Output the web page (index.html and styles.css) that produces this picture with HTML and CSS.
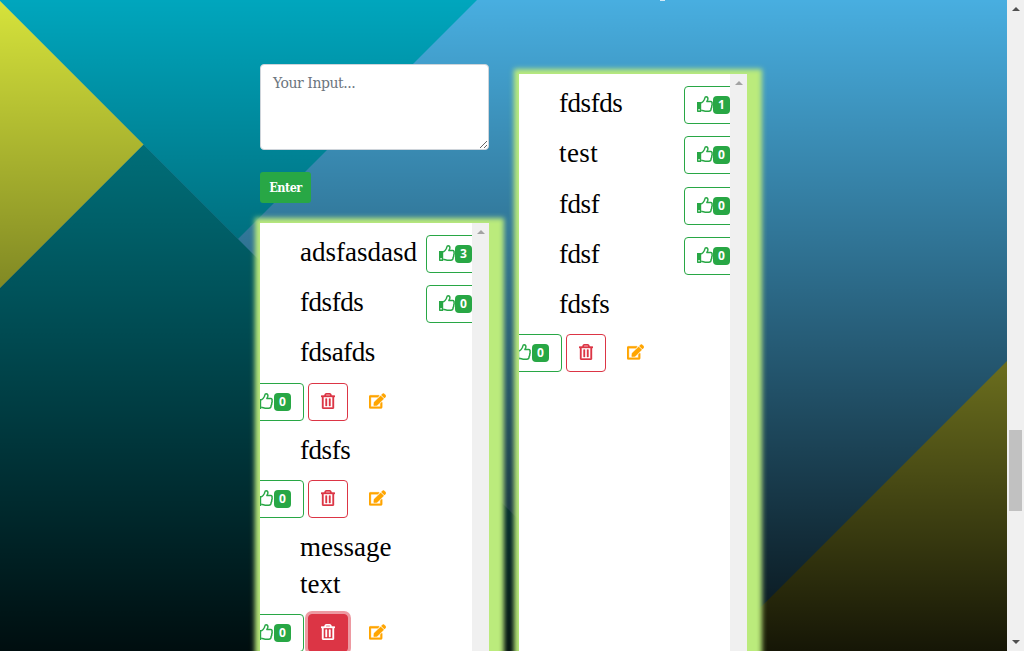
FILE: index.html
```html
<!DOCTYPE html>
<html lang="en">
<head>
<meta charset="utf-8">
<title>Messages</title>
<link rel="stylesheet" href="styles.css">
</head>
<body>
<svg class="defs" width="0" height="0" aria-hidden="true">
  <symbol id="thumb" viewBox="0 0 16 16"><path fill="currentColor" fill-rule="evenodd" d="M0 6h4.200v10H.6L0 15.400zM1.400 13v1.400h1.300V13z"/><path fill="none" stroke="currentColor" stroke-width="1.500" stroke-linejoin="round" d="M4.200 7C5.600 6.300 6.900 4.500 7.400 3.500C7.800 2.300 7.800 .8 9.100 .8C10.600 .8 11.200 2.200 10.700 3.700L9.900 5.600H13.800C14.800 5.600 15.300 6.500 15 7.500C15.300 8.500 15.200 9.300 14.700 10C14.900 11 14.700 11.800 14.100 12.400C14.200 14.200 13.400 15.200 11.700 15.200H9.600C7.600 15.200 6.200 14.500 4.200 14.200"/></symbol>
  <symbol id="trash" viewBox="0 0 448 512"><path d="M268 416h24a12 12 0 0 0 12-12V188a12 12 0 0 0-12-12h-24a12 12 0 0 0-12 12v216a12 12 0 0 0 12 12zM432 80h-82.41l-34-56.7A48 48 0 0 0 274.41 0H173.59a48 48 0 0 0-41.16 23.3L98.41 80H16A16 16 0 0 0 0 96v16a16 16 0 0 0 16 16h16v336a48 48 0 0 0 48 48h288a48 48 0 0 0 48-48V128h16a16 16 0 0 0 16-16V96a16 16 0 0 0-16-16zM171.84 50.91A6 6 0 0 1 177 48h94a6 6 0 0 1 5.15 2.91L293.61 80H154.39zM368 464H80V128h288zm-212-48h24a12 12 0 0 0 12-12V188a12 12 0 0 0-12-12h-24a12 12 0 0 0-12 12v216a12 12 0 0 0 12 12z"/></symbol>
  <symbol id="edit" viewBox="0 0 576 512"><path d="M402.6 83.2l90.2 90.2c3.8 3.8 3.8 10 0 13.8L274.4 405.6l-92.8 10.3c-12.4 1.4-22.9-9.1-21.5-21.5l10.3-92.8L388.8 83.2c3.8-3.8 10-3.8 13.8 0zm162-22.9l-48.8-48.8c-15.2-15.2-39.9-15.2-55.2 0l-35.4 35.4c-3.8 3.8-3.8 10 0 13.8l90.2 90.2c3.8 3.8 10 3.8 13.8 0l35.4-35.4c15.2-15.3 15.2-40 0-55.2zM384 346.2V448H64V128h229.8c3.2 0 6.2-1.3 8.5-3.5l40-40c7.6-7.6 2.2-20.5-8.5-20.5H48C21.5 64 0 85.5 0 112v352c0 26.5 21.5 48 48 48h352c26.5 0 48-21.5 48-48V306.2c0-10.7-12.9-16-20.5-8.5l-40 40c-2.2 2.3-3.5 5.3-3.5 8.5z"/></symbol>
</svg>
<div class="page">
  <main class="canvas">
    <svg class="backdrop" viewBox="0 0 1007 651" aria-hidden="true">
      <defs><linearGradient id="shade" x1="0" y1="0" x2="0" y2="1"><stop offset="0" stop-color="#000" stop-opacity="0"/><stop offset="1" stop-color="#000" stop-opacity=".9"/></linearGradient></defs>
      <rect width="1007" height="651" fill="#48aee0"/>
      <path fill="#00a6bd" d="M0 0H477L238 239L0 1Z"/>
      <path fill="#008a97" d="M0 288L143.500 144.500L650 651H0Z"/>
      <path fill="#d6e33b" d="M0 1L143.500 144.500L0 288Z"/>
      <path fill="#d6dc3b" d="M1007 361V651H717Z"/>
      <rect width="1007" height="651" fill="url(#shade)"/>
    </svg>
    <div class="heading-tail"></div>
    <section class="column column-left">
      <textarea class="message-input" placeholder="Your Input..."></textarea>
      <button class="enter">Enter</button>
      <div class="panel">
        <div class="list list-left">
          <div class="item"><p class="text long">adsfasdasd</p><button class="btn like"><svg class="icon"><use href="#thumb"/></svg><span class="badge">3</span></button></div>
          <div class="item"><p class="text">fdsfds</p><button class="btn like"><svg class="icon"><use href="#thumb"/></svg><span class="badge">0</span></button></div>
          <p class="text block">fdsafds</p>
          <div class="actions"><button class="btn like"><svg class="icon"><use href="#thumb"/></svg><span class="badge">0</span></button><button class="btn delete"><svg class="icon-trash"><use href="#trash"/></svg></button><svg class="icon-edit"><use href="#edit"/></svg></div>
          <p class="text block short">fdsfs</p>
          <div class="actions"><button class="btn like"><svg class="icon"><use href="#thumb"/></svg><span class="badge">0</span></button><button class="btn delete"><svg class="icon-trash"><use href="#trash"/></svg></button><svg class="icon-edit"><use href="#edit"/></svg></div>
          <p class="text block long double">message<br>text</p>
          <div class="actions"><button class="btn like"><svg class="icon"><use href="#thumb"/></svg><span class="badge">0</span></button><button class="btn delete focused"><svg class="icon-trash"><use href="#trash"/></svg></button><svg class="icon-edit"><use href="#edit"/></svg></div>
        </div>
        <div class="track"><i class="arrow up pale"></i></div>
      </div>
    </section>
    <section class="column column-right">
      <div class="panel">
        <div class="list list-right">
          <div class="item"><p class="text">fdsfds</p><button class="btn like"><svg class="icon"><use href="#thumb"/></svg><span class="badge">1</span></button></div>
          <div class="item"><p class="text test">test</p><button class="btn like"><svg class="icon"><use href="#thumb"/></svg><span class="badge">0</span></button></div>
          <div class="item"><p class="text">fdsf</p><button class="btn like"><svg class="icon"><use href="#thumb"/></svg><span class="badge">0</span></button></div>
          <div class="item"><p class="text">fdsf</p><button class="btn like"><svg class="icon"><use href="#thumb"/></svg><span class="badge">0</span></button></div>
          <p class="text block last">fdsfs</p>
          <div class="actions"><button class="btn like"><svg class="icon"><use href="#thumb"/></svg><span class="badge">0</span></button><button class="btn delete"><svg class="icon-trash"><use href="#trash"/></svg></button><svg class="icon-edit"><use href="#edit"/></svg></div>
        </div>
        <div class="track"><i class="arrow up pale"></i></div>
      </div>
    </section>
  </main>
  <aside class="track page-track"><i class="arrow up"></i><i class="handle"></i><i class="arrow down"></i></aside>
</div>
</body>
</html>
```
FILE: styles.css
```css
* { box-sizing: border-box; }
html, body { height: 100%; margin: 0; overflow: hidden; }
.defs { position: absolute; }
.page { display: flex; width: 1024px; height: 651px; overflow: hidden; }
.canvas { position: relative; display: flex; gap: 30px; width: 1007px; padding-left: 260px; overflow: hidden; }
.backdrop { position: absolute; inset: 0; width: 1007px; height: 651px; }
.heading-tail { position: absolute; left: 660px; top: 0; width: 5px; height: 1px; background: #d3eaf7; }
.column { position: relative; display: flex; flex-direction: column; align-items: flex-start; height: 720px; }
.column-left { width: 229px; padding-top: 64px; }
.column-right { width: 228px; padding-top: 74px; }

.message-input {
  flex: none; display: block; width: 229px; height: 86px; margin: 0 0 22px; padding: 8px 12px;
  border: 1px solid #ced4da; border-radius: 4px; background: #fff;
  font: 14px/20px "DejaVu Serif", serif; letter-spacing: -.45px;
}
.message-input::placeholder { color: #6c757d; opacity: 1; }
.enter {
  flex: none; width: 51px; height: 31px; margin: 0 0 20px; padding: 0; border: 0; border-radius: 3px;
  background: #28a745; color: #fff; font: bold 12.500px/31px "DejaVu Serif Condensed", "DejaVu Serif", serif; letter-spacing: -.5px;
}
.panel { display: flex; width: 100%; flex: 1; background: #fff; box-shadow: 5px 5px 5px 10px #bbeb7c; }
.list { flex: 1; min-width: 0; overflow: hidden; display: flex; flex-direction: column; gap: 12px; padding-top: 12px; }
.list-right { gap: 12.35px; }
.item { flex: none; display: flex; height: 38px; padding-left: 40px; }
.text { flex: none; width: 126px; margin: 0; font: 27px/36px "Liberation Serif", serif; letter-spacing: -.45px; color: #000; transform: translateY(-1px); }
.list-right .text { width: 125px; }
.text.long { letter-spacing: 0; }
.text.test { letter-spacing: .4px; }
.text.block { margin-left: 40px; }
.text.short { height: 35px; }
.text.last { height: 34.500px; }
.text.double { height: 72px; line-height: 37px; }
.actions { flex: none; display: flex; align-items: center; height: 38px; margin-left: -14px; }
.list-right .actions { margin-left: -15px; }
.btn { flex: none; display: flex; align-items: center; height: 38px; padding: 0 11px; border: 1px solid; border-radius: 4px; background: transparent; }
.like { width: 58px; color: #28a745; border-color: #28a745; }
.item .like { padding-left: 12px; }
.delete { justify-content: center; width: 40px; margin-left: 4px; color: #dc3545; border-color: #dc3545; }
.delete.focused { background: #dc3545; color: #fff; box-shadow: 0 0 0 3px rgba(220, 53, 69, .5); }
.icon { flex: none; width: 16px; height: 16px; fill: currentColor; margin-top: -2px; }
.actions .icon { margin-left: -1px; margin-right: 1px; }
.icon-trash { flex: none; width: 14px; height: 16px; fill: currentColor; stroke: currentColor; stroke-width: 12px; margin-top: -2px; }
.icon-edit { flex: none; width: 17px; height: 16px; margin: -2px 0 0 20.600px; fill: #ffa500; stroke: #ffa500; stroke-width: 12px; }
.badge { flex: none; width: 17px; height: 18px; border-radius: 4px; background: #28a745; color: #fff; font: bold 12px/18px "Open Sans", "Noto Sans", sans-serif; text-align: center; }
.track { flex: none; display: flex; flex-direction: column; align-items: center; width: 17px; padding-top: 7px; background: #f0f0f0; }
.arrow { width: 0; height: 0; border: 4px solid transparent; }
.arrow.up { border-top: 0; border-bottom-color: #505050; }
.arrow.pale { border-bottom-color: #a3a3a3; }
.arrow.down { margin-top: 129px; border-bottom: 0; border-top-color: #505050; }
.handle { width: 13px; height: 81px; margin-top: 419px; background: #c1c1c1; }
```
